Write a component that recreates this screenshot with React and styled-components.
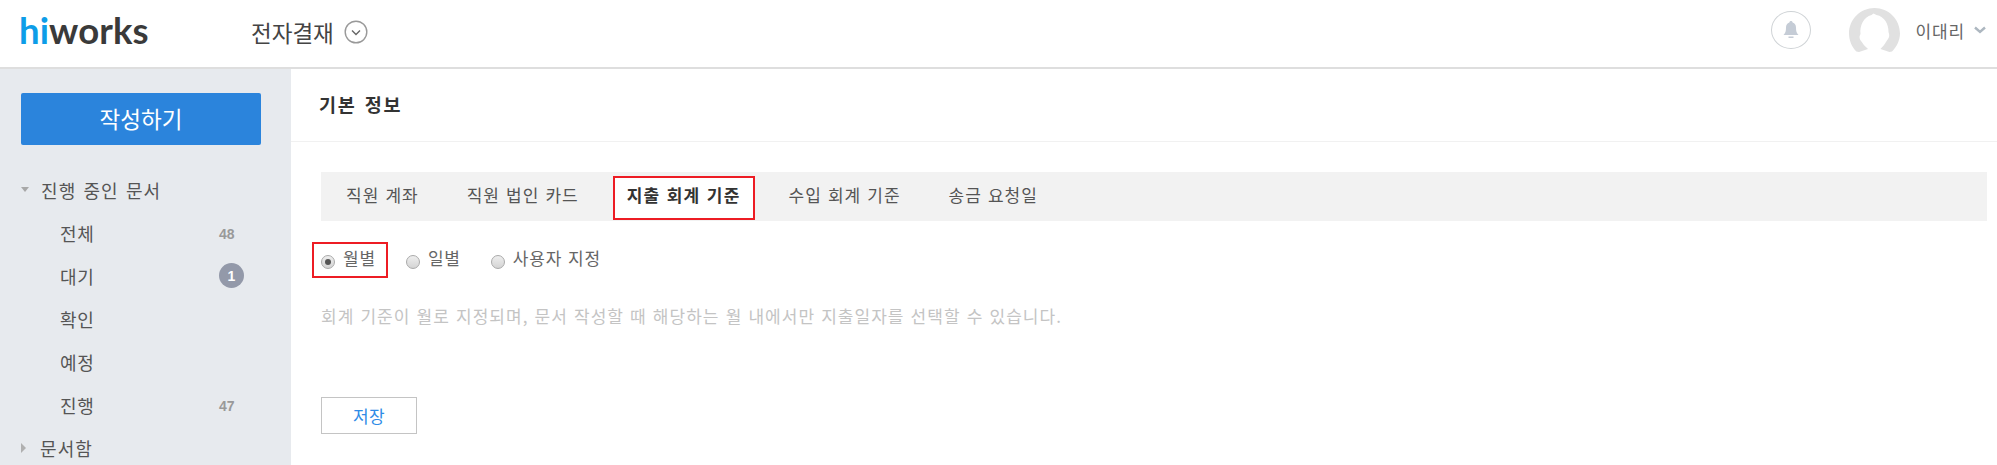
import React from 'react';
import styled, { createGlobalStyle } from 'styled-components';

const GlobalStyle = createGlobalStyle`
  html, body {
    margin: 0;
    height: 465px;
    overflow: hidden;
    background: #fff;
    font-family: "Noto Sans CJK KR", "Liberation Sans", sans-serif;
  }
  * { box-sizing: border-box; }
`;

const Header = styled.header`
  display: flex;
  align-items: center;
  height: 69px;
  padding: 0 11px 7px 19px;
  border-bottom: 2px solid #dedede;
`;

const Logo = styled.div`
  width: 232px;
  font-family: "Lato", sans-serif;
  font-size: 36.5px;
  line-height: 40px;
  font-weight: 700;
  letter-spacing: 0.1px;
  color: #3a3a3a;
  span { color: #0d9de8; }
`;

const AppTitle = styled.div`
  display: flex;
  align-items: center;
  gap: 10px;
  padding-top: 3px;
  font-size: 22.5px;
  color: #444;
`;

const UserArea = styled.div`
  display: flex;
  align-items: center;
  margin-left: auto;
`;

const BellCircle = styled.div`
  display: flex;
  align-items: center;
  justify-content: center;
  width: 40px;
  height: 38px;
  margin-right: 38px;
  border: 1px solid #cfd3d6;
  border-radius: 50%;
`;

const UserName = styled.span`
  margin-left: 15px;
  margin-right: 9px;
  font-size: 17px;
  letter-spacing: 0.9px;
  color: #666;
`;

const Body = styled.div`
  display: flex;
  height: 396px;
`;

const Sidebar = styled.aside`
  flex: 0 0 291px;
  padding: 24px 30px 0 21px;
  background: #e7eaee;
  overflow: hidden;
`;

const WriteButton = styled.button`
  display: block;
  width: 240px;
  height: 52px;
  padding: 0 0 2px;
  border: 0;
  border-radius: 2px;
  background: #2b84dc;
  color: #fff;
  font: inherit;
  font-size: 22.5px;
`;

const MenuHead = styled.div`
  display: flex;
  align-items: center;
  height: 43px;
  font-size: 18px;
  letter-spacing: 1.1px;
  word-spacing: 2px;
  color: #555;
`;

const FirstHead = styled(MenuHead)`
  margin-top: 23px;
`;

const Arrow = styled.i`
  width: 0;
  height: 0;
  margin-right: ${p => (p.$open ? 12 : 14)}px;
  border-style: solid;
  border-color: transparent;
  ${p => p.$open
    ? 'border-width: 5px 4px 0 4px; border-top-color: #a8a8a8;'
    : 'border-width: 5px 0 5px 5px; border-left-color: #b0b0b0;'}
`;

const MenuRow = styled.div`
  display: flex;
  align-items: center;
  justify-content: space-between;
  height: 43px;
  padding-left: 39px;
  font-size: 18px;
  letter-spacing: 0.7px;
  color: #555;
`;

const Count = styled.span`
  width: 42px;
  padding-top: 2px;
  font-family: "Liberation Sans", sans-serif;
  font-size: 14px;
  letter-spacing: 0;
  font-weight: 700;
  color: #999;
`;

const CountBadge = styled.span`
  display: flex;
  align-items: center;
  justify-content: center;
  width: 25px;
  height: 25px;
  margin-right: 17px;
  border-radius: 50%;
  background: #9399a9;
  font-family: "Liberation Sans", sans-serif;
  font-size: 14px;
  font-weight: 700;
  letter-spacing: 0;
  color: #fff;
`;

const Main = styled.main`
  flex: 1;
`;

const SectionTitle = styled.h2`
  height: 73px;
  margin: 0;
  padding-left: 28px;
  border-bottom: 1px solid #f1f1f1;
  font-size: 18.5px;
  font-weight: 700;
  letter-spacing: 1.8px;
  word-spacing: 2px;
  line-height: 71px;
  color: #333;
`;

const Section = styled.section`
  padding: 30px 10px 0 30px;
`;

const TabBar = styled.div`
  display: flex;
  align-items: flex-start;
  height: 49px;
  padding: 4px 0 0 11px;
  background: #f2f2f2;
`;

const Tab = styled.div`
  height: 44px;
  margin-right: 20px;
  padding: 0 12px;
  font-size: 17px;
  font-weight: ${p => (p.$active ? 700 : 400)};
  letter-spacing: ${p => (p.$active ? 1.2 : 1)}px;
  word-spacing: 1.3px;
  line-height: 34px;
  color: ${p => (p.$active ? '#333' : '#555')};
  background: ${p => (p.$active ? '#fff' : 'transparent')};
  border: 2px solid ${p => (p.$active ? '#ed1c24' : 'transparent')};
`;

const RadioRow = styled.div`
  display: flex;
  align-items: center;
  gap: 9px;
  margin-top: 21px;
  margin-left: -9px;
`;

const RadioItem = styled.label`
  display: flex;
  align-items: center;
  gap: 8px;
  height: 36px;
  padding: 0 10px 5px 7px;
  border: 2px solid ${p => (p.$marked ? '#ed1c24' : 'transparent')};
  font-size: 17px;
  letter-spacing: 0.8px;
  word-spacing: 1.3px;
  color: #666;
`;

const RadioDot = styled.span`
  display: flex;
  align-items: center;
  justify-content: center;
  width: 14px;
  height: 14px;
  margin-top: 9px;
  border: 1px solid #aaa;
  border-radius: 50%;
  background: linear-gradient(#eee, #d4d4d4);
  &::after {
    content: '';
    display: ${p => (p.$checked ? 'block' : 'none')};
    width: 6px;
    height: 6px;
    border-radius: 50%;
    background: #555;
  }
`;

const Description = styled.p`
  margin: 26px 0 0;
  font-size: 17px;
  letter-spacing: 1.02px;
  word-spacing: 1.3px;
  line-height: 24px;
  color: #c4c4c4;
`;

const SaveButton = styled.button`
  display: block;
  width: 96px;
  height: 37px;
  margin-top: 69px;
  border: 1px solid #c4c4c4;
  background: #fff;
  font: inherit;
  font-size: 17px;
  letter-spacing: 0.4px;
  color: #2e8be6;
`;

const ChevronCircle = () => (
  <svg width="24" height="24" viewBox="0 0 24 24" fill="none">
    <circle cx="12" cy="12" r="10.8" stroke="#999" strokeWidth="1.4" />
    <path d="M8 10.5l4 4 4-4" stroke="#666" strokeWidth="1.4" />
  </svg>
);

const BellIcon = () => (
  <svg width="18" height="20" viewBox="0 0 18 20">
    <path fill="#c5ccd6" d="M9 1c.9 0 1.500.6 1.600 1.400C13 3.100 14 5 14 7.500c0 3.500.6 5.700 2.500 7.500h-15C3.400 13.200 4 11 4 7.500 4 5 5 3.100 7.400 2.400 7.500 1.600 8.100 1 9 1z" />
    <rect x="6.500" y="16.500" width="5" height="1.500" fill="#c5ccd6" />
  </svg>
);

const Avatar = () => (
  <svg width="51" height="44" viewBox="0 0 51 44">
    <path
      fill="#e1e1e1"
      d="M25.500 0C11.400 0 0 11.400 0 25.500c0 7 2.900 13.400 7.400 18L10 44l9-3c-2-2-4-3.500-5.500-6-1-2-3-3-3-6 0-1 .5-2 1-3-1-8 3-17 11-19l2-1.500 3 1.500c8 1.500 12 9 12 17 .5 2 1 3 .5 5-.5 2-2 3-3 5-1.500 3-4 5-5.500 7l9 3 2.500-.5c4.500-4.600 8-11 8-18C51 11.400 39.600 0 25.500 0z"
    />
  </svg>
);

const Chevron = () => (
  <svg width="12" height="8" viewBox="0 0 12 8" fill="none">
    <path d="M1 1.500l5 4.500 5-4.500" stroke="#adb7c0" strokeWidth="2.4" />
  </svg>
);

const menu = [
  { name: '전체', count: 48 },
  { name: '대기', badge: 1 },
  { name: '확인' },
  { name: '예정' },
  { name: '진행', count: 47 },
];

const tabs = ['직원 계좌', '직원 법인 카드', '지출 회계 기준', '수입 회계 기준', '송금 요청일'];

const App = () => (
  <React.Fragment>
    <GlobalStyle />
    <Header>
      <Logo><span>hi</span>works</Logo>
      <AppTitle>전자결재 <ChevronCircle /></AppTitle>
      <UserArea>
        <BellCircle><BellIcon /></BellCircle>
        <Avatar />
        <UserName>이대리</UserName>
        <Chevron />
      </UserArea>
    </Header>
    <Body>
      <Sidebar>
        <WriteButton>작성하기</WriteButton>
        <FirstHead><Arrow $open />진행 중인 문서</FirstHead>
        {menu.map(item => (
          <MenuRow key={item.name}>
            {item.name}
            {item.count && <Count>{item.count}</Count>}
            {item.badge && <CountBadge>{item.badge}</CountBadge>}
          </MenuRow>
        ))}
        <MenuHead><Arrow />문서함</MenuHead>
      </Sidebar>
      <Main>
        <SectionTitle>기본 정보</SectionTitle>
        <Section>
          <TabBar>
            {tabs.map((tab, i) => (
              <Tab key={tab} $active={i === 2}>{tab}</Tab>
            ))}
          </TabBar>
          <RadioRow>
            <RadioItem $marked><RadioDot $checked />월별</RadioItem>
            <RadioItem><RadioDot />일별</RadioItem>
            <RadioItem><RadioDot />사용자 지정</RadioItem>
          </RadioRow>
          <Description>회계 기준이 월로 지정되며, 문서 작성할 때 해당하는 월 내에서만 지출일자를 선택할 수 있습니다.</Description>
          <SaveButton>저장</SaveButton>
        </Section>
      </Main>
    </Body>
  </React.Fragment>
);

export default App;
